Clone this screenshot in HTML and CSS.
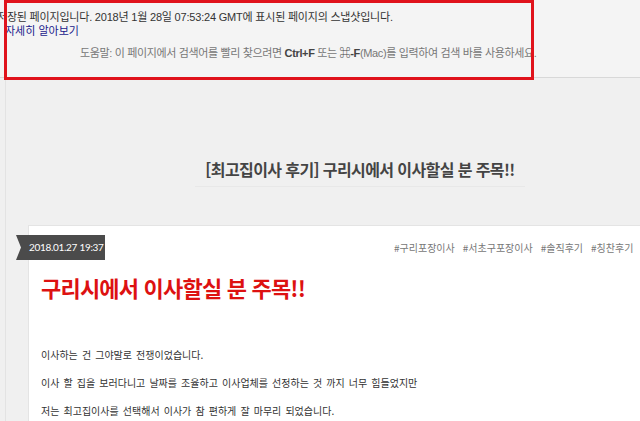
FILE: index.html
```html
<!DOCTYPE html>
<html lang="ko">
<head>
<meta charset="utf-8">
<title>구리시에서 이사할실 분 주목!!</title>
<link rel="stylesheet" href="styles.css">
</head>
<body>
<div class="snapshot-bar">
  <div class="snap-line">저장된 페이지입니다. 2018년 1월 28일 07:53:24 GMT에 표시된 페이지의 스냅샷입니다.</div>
  <a class="snap-link" href="#">자세히 알아보기</a>
  <div class="snap-tip">도움말: 이 페이지에서 검색어를 빨리 찾으려면 <b>Ctrl+F</b> 또는 <b>⌘-F</b>(Mac)를 입력하여 검색 바를 사용하세요.</div>
  <div class="highlight"></div>
</div>
<div class="page">
  <div class="post-head">
    <h1 class="post-title">[최고집이사 후기] 구리시에서 이사할실 분 주목!!</h1>
  </div>
  <article class="card">
    <div class="date-ribbon">2018.01.27 19:37</div>
    <div class="tags">
      <span>#구리포장이사</span><span>#서초구포장이사</span><span>#솔직후기</span><span>#칭찬후기</span><span>#최고집이사</span>
    </div>
    <h2 class="headline">구리시에서 이사할실 분 주목!!</h2>
    <div class="body-text">
      <p>이사하는 건 그야말로 전쟁이었습니다.</p>
      <p>이사 할 집을 보러다니고 날짜를 조율하고 이사업체를 선정하는 것 까지 너무 힘들었지만</p>
      <p>저는 최고집이사를 선택해서 이사가 참 편하게 잘 마무리 되었습니다.</p>
    </div>
  </article>
</div>
</body>
</html>
```

FILE: styles.css
```css
* { box-sizing: border-box; }
html, body {
  margin: 0;
  padding: 0;
  width: 640px;
  height: 421px;
  overflow: hidden;
  background: #f0f0f0;
}
body {
  font-family: "Noto Sans CJK KR", sans-serif;
}
.snapshot-bar {
  position: relative;
  height: 78px;
  background: #f4f4f4;
  border-bottom: 1px solid #d8d8d8;
  padding-top: 10px;
  font-family: "Liberation Sans", "Noto Sans CJK KR", sans-serif;
  font-size: 11px;
  line-height: 14px;
  color: #333;
}
.snap-line {
  margin-left: -3px;
  white-space: nowrap;
  letter-spacing: -0.2px;
}
.snap-link {
  display: block;
  margin-left: 5px;
  color: #1a1a8c;
  text-decoration: none;
}
.snap-tip {
  margin-top: 8px;
  padding-left: 80px;
  color: #777;
  white-space: nowrap;
  letter-spacing: -0.35px;
}
.snap-tip b { color: #444; }
.highlight {
  position: absolute;
  left: 4px;
  top: 0;
  width: 530px;
  height: 80px;
  border: 3px solid #e0131c;
}
.page {
  margin-left: 5px;
  border-left: 1px solid #e3e3e3;
  height: 343px;
}
.post-head {
  display: flex;
  justify-content: center;
  padding: 80px 0 38px 74px;
}
.post-title {
  margin: 0;
  padding: 0 10px 6px;
  font-size: 16px;
  letter-spacing: -0.6px;
  line-height: 22px;
  font-weight: 700;
  color: #444;
  border-bottom: 1px solid #e8e8e8;
}
.card {
  position: relative;
  margin-left: 22px;
  margin-right: -10px;
  background: #fff;
  border-top: 1px solid #e4e4e4;
  border-left: 1px solid #e4e4e4;
  padding: 14px 0 0 12px;
  height: 240px;
}
.date-ribbon {
  position: absolute;
  left: -13px;
  top: 9px;
  width: 89px;
  height: 25px;
  background: #4b4b4b;
  color: #fff;
  font-family: Lato, sans-serif;
  font-size: 10px;
  letter-spacing: -0.3px;
  white-space: nowrap;
  line-height: 25px;
  padding-left: 13px;
  clip-path: polygon(0 0, 100% 0, 100% 100%, 0 100%, 5px 50%);
}
.tags {
  margin-left: 353px;
  white-space: nowrap;
  font-size: 10px;
  line-height: 16px;
  color: #777;
  display: flex;
  gap: 8px;
}
.headline {
  margin: 16px 0 0;
  font-size: 22px;
  letter-spacing: -0.8px;
  line-height: 30px;
  font-weight: 700;
  color: #dd1111;
}
.body-text {
  padding-top: 46px;
  font-size: 10px;
  word-spacing: 1.3px;
  color: #333;
}
.body-text p {
  margin: 0 0 14px;
  line-height: 14px;
}
```
